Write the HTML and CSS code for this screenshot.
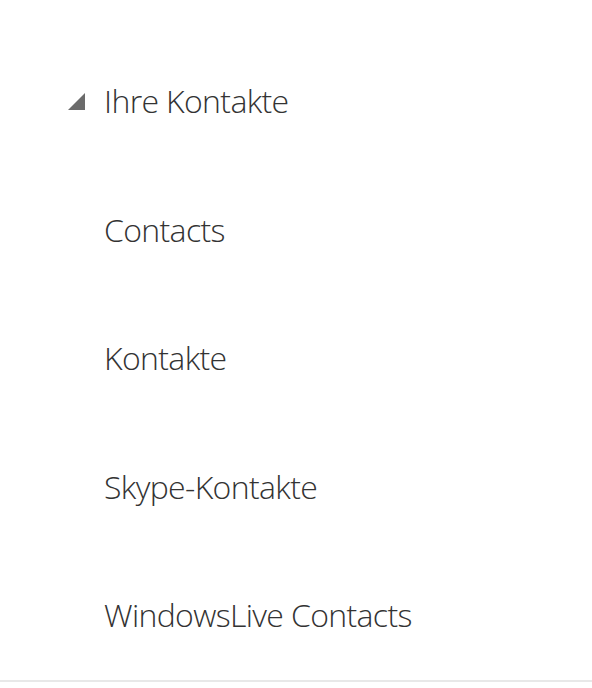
FILE: index.html
```html
<!DOCTYPE html>
<html lang="de">
<head>
<meta charset="utf-8">
<title>Ihre Kontakte</title>
<link rel="stylesheet" href="styles.css">
</head>
<body>
<div class="tree">
  <div class="row">
    <span class="toggle">
      <svg width="17" height="17" viewBox="0 0 17 17"><polygon points="17,0 17,17 0,17" fill="#6b6b6b"/></svg>
    </span>
    <span class="label">Ihre Kontakte</span>
  </div>
  <div class="row"><span class="toggle"></span><span class="label">Contacts</span></div>
  <div class="row"><span class="toggle"></span><span class="label">Kontakte</span></div>
  <div class="row"><span class="toggle"></span><span class="label">Skype-Kontakte</span></div>
  <div class="row"><span class="toggle"></span><span class="label">WindowsLive Contacts</span></div>
</div>
</body>
</html>
```
FILE: styles.css
```css
html, body {
  margin: 0;
  padding: 0;
  background: #ffffff;
}
.tree {
  padding-top: 37px;
  border-bottom: 2px solid #e8e8e8;
  font-family: "Open Sans", "Segoe UI", sans-serif;
  font-weight: 300;
  color: #333333;
}
.row {
  height: 128.5px;
  display: flex;
  align-items: center;
  padding-left: 68px;
}
.toggle {
  width: 36px;
  height: 17px;
  display: flex;
  align-items: flex-start;
  flex-shrink: 0;
}
.toggle svg {
  display: block;
}
.label {
  font-size: 32px;
  line-height: 40px;
  letter-spacing: -0.65px;
  white-space: nowrap;
}
```
